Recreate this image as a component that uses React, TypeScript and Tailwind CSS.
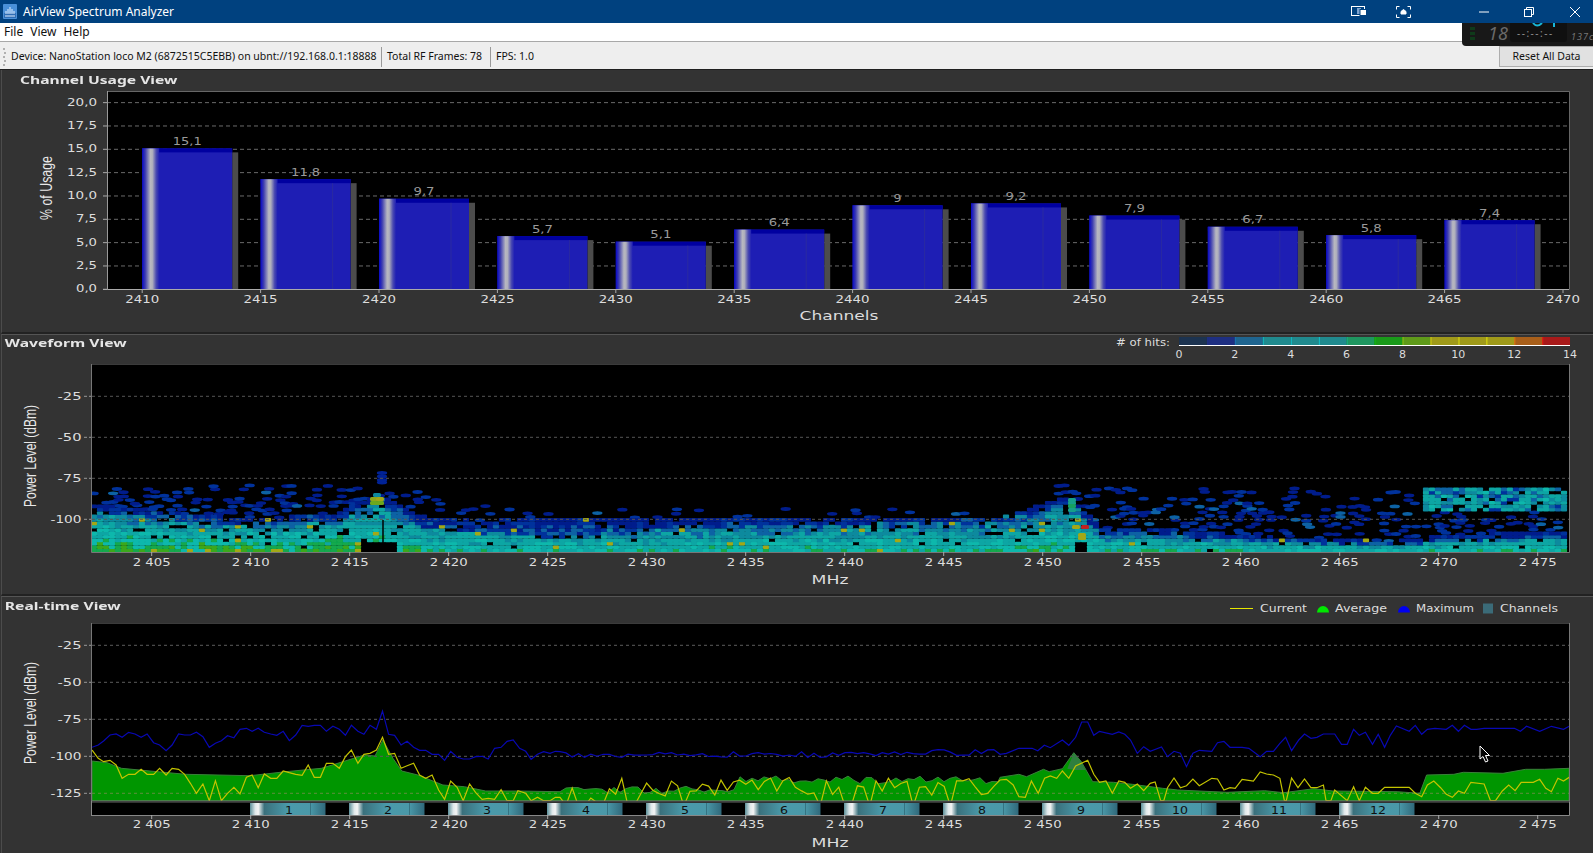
import React from "react";

type Pt = [number, number];
const seed = (s: number) => {
  let v = s;
  return () => {
    v = (v * 1664525 + 1013904223) % 4294967296;
    return v / 4294967296;
  };
};
const interp = (pts: Pt[], x: number) => {
  if (x <= pts[0][0]) return pts[0][1];
  for (let i = 1; i < pts.length; i++) {
    if (x <= pts[i][0]) {
      const [a, b] = pts[i - 1];
      const [c, d] = pts[i];
      return b + ((d - b) * (x - a)) / (c - a);
    }
  }
  return pts[pts.length - 1][1];
};
const L = (pts: number[][]): Pt[] => pts.map(([x, y]) => [x / 2.8, 690 + y / 3]);
const R = (pts: number[][]): Pt[] => pts.map(([x, y]) => [1000 + x / 2.644, 690 + y / 3]);
const str = (pts: Pt[]) => pts.map(([x, y]) => `${x.toFixed(1)},${y.toFixed(1)}`).join(" ");

const blueL = L([[258,172],[275,165],[290,153],[308,135],[325,132],[342,142],[360,127],[378,132],[395,142],[412,132],[430,158],[447,165],[465,182],[482,165],[500,132],[517,135],[533,135],[550,127],[568,140],[586,172],[603,160],[620,152],[637,137],[655,143],[672,118],[690,115],[706,124],[723,115],[740,127],[758,132],[775,136],[793,124],[810,152],[828,135],[846,106],[863,109],[880,106],[897,106],[914,124],[932,109],[950,118],[967,136],[984,106],[1002,124],[1019,133],[1036,106],[1054,118],[1071,63],[1088,133],[1105,136],[1123,165],[1140,154],[1158,172],[1175,181],[1192,181],[1210,193],[1228,193],[1245,211],[1262,184],[1280,202],[1297,207],[1315,207],[1332,200],[1350,199],[1367,207],[1385,175],[1403,172],[1420,154],[1437,150],[1455,175],[1472,184],[1487,208],[1505,193],[1522,185],[1540,190],[1555,184],[1568,185]]);
const blueR = R([[0,193],[17,190],[50,175],[85,175],[100,182],[117,166],[133,173],[165,150],[182,166],[200,142],[216,96],[232,96],[248,136],[263,124],[297,133],[314,126],[330,133],[345,150],[363,190],[380,170],[397,184],[427,171],[443,200],[460,184],[477,190],[493,230],[510,190],[527,181],[560,184],[575,158],[592,154],[608,172],[640,172],[658,175],[688,200],[705,184],[723,184],[740,160],[755,142],[771,182],[790,150],[805,132],[822,145],[838,142],[855,132],[885,132],[903,163],[918,163],[935,118],[950,136],[966,127],[985,163],[1000,133],[1017,172],[1032,136],[1048,108],[1082,124],[1098,106],[1115,133],[1130,118],[1150,115],[1180,118],[1196,106],[1212,124],[1228,106],[1245,118],[1260,118],[1280,115],[1360,115],[1376,124],[1392,109],[1427,124],[1458,109],[1490,118],[1505,109]]);
const yellowL = L([[258,180],[275,205],[290,215],[308,211],[325,225],[342,265],[360,253],[378,253],[395,238],[412,253],[430,253],[447,235],[465,255],[482,235],[500,238],[517,253],[533,280],[550,310],[568,282],[586,332],[603,272],[620,332],[637,310],[655,292],[672,312],[690,262],[706,255],[723,293],[740,252],[758,265],[775,265],[793,243],[810,248],[828,253],[846,256],[863,225],[880,262],[897,262],[914,220],[932,220],[950,235],[967,200],[984,180],[1002,220],[1019,193],[1036,190],[1054,180],[1071,142],[1088,193],[1105,190],[1123,235],[1140,227],[1158,220],[1175,255],[1192,265],[1210,255],[1228,300],[1245,328],[1262,273],[1280,292],[1297,332],[1315,282],[1332,308],[1350,328],[1367,325],[1385,328],[1403,299],[1420,332],[1437,332],[1450,302],[1472,310],[1487,332],[1505,322],[1522,332],[1540,332],[1555,322],[1568,322]]);
const yellowR = R([[0,270],[17,268],[35,285],[50,320],[67,322],[83,273],[101,310],[118,265],[133,258],[150,265],[165,243],[182,265],[200,228],[232,211],[248,253],[263,277],[280,273],[297,310],[314,273],[330,277],[345,295],[363,282],[380,302],[397,280],[410,276],[425,332],[433,332],[443,293],[460,264],[477,293],[493,287],[510,267],[527,287],[560,265],[575,267],[592,300],[608,293],[622,295],[640,268],[670,273],[688,246],[705,252],[723,255],[740,265],[752,332],[757,332],[771,264],[788,293],[805,267],[822,293],[838,293],[855,285],[862,332],[875,332],[885,300],[918,332],[935,290],[950,332],[966,292],[985,310],[1000,310],[1017,292],[1048,292],[1082,292],[1098,310],[1115,320],[1130,285],[1147,273],[1165,293],[1180,313],[1196,322],[1212,303],[1228,310],[1245,277],[1280,282],[1297,332],[1310,332],[1328,303],[1345,285],[1362,302],[1378,277],[1410,277],[1427,268],[1443,295],[1458,305],[1475,265],[1490,273],[1505,262]]);

const r1 = seed(7);
const midBlue: Pt[] = [];
const midYellow: Pt[] = [];
for (let x = 566; x < 1000; x += 6.2) {
  midBlue.push([x, 754.5 - (x > 900 ? 2 : 0) + (r1() - 0.5) * 6]);
  const base = x < 620 ? 797 : 786;
  let y = base + (r1() - 0.5) * 20;
  if (r1() < 0.12) y = 806;
  midYellow.push([x, y]);
}
const greenL = L([[258,213],[300,218],[340,235],[420,243],[520,253],[700,257],[800,245],[900,235],[960,215],[1020,195],[1050,198],[1072,150],[1100,205],[1125,243],[1170,255],[1240,285],[1300,290],[1360,303],[1450,303],[1568,305]]);
const greenR = R([[0,262],[50,253],[70,260],[115,238],[130,245],[165,236],[195,188],[215,215],[245,275],[300,277],[350,283],[430,295],[470,300],[600,307],[700,302],[750,308],[830,296],[880,303],[1050,305],[1110,310],[1128,255],[1200,253],[1225,247],[1330,250],[1390,238],[1440,238],[1505,235]]);
const r2 = seed(21);
const greenMid: Pt[] = [];
for (let x = 566; x < 1000; x += 6) {
  const base = x < 735 ? 790 : 780;
  greenMid.push([x, base + (r2() - 0.5) * 8]);
}
const greenTop = [...greenL, ...greenMid, ...greenR];
const greenPoly = `92,801 ${str(greenTop)} 1569,801`;
const spikePoly = str(R([[178,236],[195,188],[215,215],[226,240],[200,240]]));

// waveform heat-map
const bandTopPts: Pt[] = [[92,504],[190,514],[250,519],[340,513],[352,503],[380,496],[386,498],[420,516],[470,520],[1000,517],[1040,505],[1072,496],[1086,512],[1100,527],[1190,531],[1290,538],[1390,541],[1437,536],[1569,530]];
const strongTopPts: Pt[] = [[92,510],[190,522],[250,526],[340,520],[352,510],[380,503],[386,505],[420,527],[500,536],[590,538],[650,530],[740,526],[850,524],[950,521],[1030,513],[1072,498],[1086,520],[1100,533],[1190,537],[1290,543],[1390,547],[1437,542],[1569,537]];
const density: Pt[] = [[92,1.26],[340,1.26],[420,1.05],[520,.92],[700,.95],[900,1],[1060,1.04],[1180,1],[1569,1]];
const sparseTop: Pt[] = [[92,486],[340,484],[380,482],[440,498],[520,508],[1000,510],[1060,484],[1100,486],[1420,488],[1569,490]];
const sparseProb: Pt[] = [[92,.32],[380,.38],[440,.2],[520,.08],[1000,.08],[1060,.3],[1100,.3],[1420,.22],[1569,.22]];
const heatColor = (v: number) =>
  v < 0.2 ? "#001f8c" : v < 0.33 ? "#00339c" : v < 0.47 ? "#0a62a4" : v < 0.62 ? "#0a8a9e" : v < 0.85 ? "#0ca6a4" : v < 1 ? "#10b8ac" : v < 1.14 ? "#12a84e" : v < 1.24 ? "#3aa81c" : "#a3a818";
type Cell = { x: number; y: number; c: string; sparse: boolean };
const cells: Cell[] = [];
{
  const r = seed(99);
  for (let x = 94; x < 1570; x += 6) {
    const bandTop = interp(bandTopPts, x);
    const strong = interp(strongTopPts, x);
    const dens = interp(density, x);
    const sTop = interp(sparseTop, x);
    const sP = interp(sparseProb, x);
    const gap = (x > 363 && x < 397) || (x > 1075 && x < 1087);
    for (let y = 550.5; y > 478; y -= 3.4) {
      if (gap && y > 543) continue;
      if (x > 1425 && y > 488 && y < 513) {
        if (r() < 0.9) cells.push({ x, y, c: heatColor(0.28 + r() * 0.6), sparse: false });
        continue;
      }
      if (y >= bandTop) {
        const t = (y - bandTop) / Math.max(552 - bandTop, 1);
        let v = (0.14 + t * 0.68) * dens + (r() - 0.5) * 0.36 + (y > strong ? 0.14 : -0.04);
        if (r() < 0.012) v = 1.3;
        if (r() < 0.86 + t * 0.14) cells.push({ x, y, c: heatColor(v), sparse: false });
      } else if (y > sTop) {
        const d = (bandTop - y) / Math.max(bandTop - sTop, 1);
        if (r() < sP * (1 - 0.55 * d)) cells.push({ x: x + r() * 4 - 2, y: y + r() * 2 - 1, c: heatColor(r() * 0.36), sparse: true });
      }
    }
  }
  for (const y of [473, 476.5, 480, 482.5]) cells.push({ x: 382, y, c: "#002296", sparse: true });
}
const hotspots = [
  [374, 499, "#8fa818"], [380, 499, "#a3a818"], [374, 503, "#6da81c"], [380, 503, "#6da81c"], [377, 495, "#0a8a9e"],
  [1072, 500, "#14a08a"], [1072, 503, "#14a08a"], [1072, 506, "#14a060"], [1072, 510, "#14a08a"],
  [1076, 527, "#a3a818"], [1085, 527, "#c02020"], [1082, 535, "#a3a818"], [1082, 538, "#a3a818"],
] as const;

const Num = "'DejaVu Sans', sans-serif";
const AxisText = ({ x, y, w, children, anchor = "middle", fill = "#dddddd", size = 11 }: { x: number; y: number; w: number; children: React.ReactNode; anchor?: "middle" | "end" | "start"; fill?: string; size?: number }) => (
  <text x={x} y={y} textAnchor={anchor} textLength={w} lengthAdjust="spacingAndGlyphs" fontFamily={Num} fontSize={size} fill={fill}>
    {children}
  </text>
);

const bars = [15.1, 11.8, 9.7, 5.7, 5.1, 6.4, 9, 9.2, 7.9, 6.7, 5.8, 7.4];
const yTicks1 = ["0,0", "2,5", "5,0", "7,5", "10,0", "12,5", "15,0", "17,5", "20,0"];

function ChannelChart() {
  const Y = (v: number) => 289.3 - v * 9.333;
  return (
    <svg className="block w-[1591px] h-[241px]" viewBox="2 91 1591 241">
      <defs>
        <linearGradient id="barShine" x1="0" x2="1" y1="0" y2="0">
          <stop offset="0" stopColor="#0808c8" />
          <stop offset="0.18" stopColor="#3c3cb0" />
          <stop offset="0.48" stopColor="#b8b8c0" />
          <stop offset="0.6" stopColor="#b0b0bc" />
          <stop offset="0.82" stopColor="#4a4ab0" />
          <stop offset="1" stopColor="#1e1eb4" />
        </linearGradient>
      </defs>
      <rect x="107" y="91.5" width="1462" height="198" fill="#000" />
      {yTicks1.map((t, i) => {
        const y = Y(i * 2.5);
        return (
          <g key={t}>
            {i > 0 && <line x1="107" x2="1569" y1={y} y2={y} stroke="#6a6a6a" strokeDasharray="4 3" />}
            <line x1="103" x2="107" y1={y} y2={y} stroke="#aaa" />
            <AxisText x={97} y={y + 3} w={t.length > 3 ? 30 : 21} anchor="end">{t}</AxisText>
          </g>
        );
      })}
      {bars.map((v, i) => {
        const x = 142.2 + 118.4 * i;
        const top = Y(v);
        const h = 289.3 - top;
        const label = String(v).replace(".", ",");
        return (
          <g key={i}>
            <rect x={x + 90} y={top + 4} width={6} height={h - 4} fill="#4c4c4c" />
            <rect x={x} y={top} width={90} height={h} fill="#1e1eb4" />
            <rect x={x} y={top} width={90} height={4} fill="#0000a0" />
            <rect x={x} y={top} width={17} height={h} fill="url(#barShine)" />
            {i > 0 && <line x1={x + 72} x2={x + 72} y1={top + 4} y2={289} stroke="#2a2aa0" />}
            <AxisText x={x + 45} y={top - 3.5} w={label.length > 3 ? 29 : label.length > 1 ? 21 : 8} fill="#9a9a9a">{label}</AxisText>
          </g>
        );
      })}
      <path d="M107.5 91V289.5M107 91.5H1569.5V289.5" fill="none" stroke="#666" />
      <line x1="103" x2="1569" y1="289.5" y2="289.5" stroke="#aaa" />
      <line x1="107.5" x2="107.5" y1="91" y2="290" stroke="#999" />
      {Array.from({ length: 13 }).map((_, i) => {
        const x = 142.2 + 118.4 * i;
        return (
          <g key={i}>
            <line x1={x} x2={x} y1="289" y2="293" stroke="#aaa" />
            <AxisText x={x} y={302.5} w={34}>{2410 + i * 5}</AxisText>
          </g>
        );
      })}
      <AxisText x={839} y={320} w={79} size={12}>Channels</AxisText>
      <text transform="translate(52,188) rotate(-90)" textAnchor="middle" textLength={64} lengthAdjust="spacingAndGlyphs" fontFamily="'Liberation Sans', sans-serif" fontSize={16} fill="#e8e8e8">% of Usage</text>
    </svg>
  );
}

const mhzLabels = Array.from({ length: 15 }, (_, i) => 2405 + i * 5);
const FreqAxis = ({ tickY, labelY, titleY }: { tickY: number; labelY: number; titleY: number }) => (
  <g>
    {mhzLabels.map((f, i) => {
      const x = 151.7 + i * 99;
      return (
        <g key={f}>
          <line x1={x} x2={x} y1={tickY} y2={tickY + 4} stroke="#aaa" />
          <AxisText x={x} y={labelY} w={38}>{`2 ${f - 2000}`}</AxisText>
        </g>
      );
    })}
    <AxisText x={830} y={titleY} w={37} size={12}>MHz</AxisText>
  </g>
);

function WaveformChart() {
  const ticks: [string, number][] = [["-25", 396.3], ["-50", 437.3], ["-75", 478.3], ["-100", 519.3]];
  return (
    <svg className="block w-[1591px] h-[230px]" viewBox="2 364 1591 230">
      <defs>
        <clipPath id="wfClip"><rect x="92" y="364" width="1477" height="188" /></clipPath>
        <filter id="soft" x="0" y="0" width="1" height="1"><feGaussianBlur stdDeviation="0.75" /></filter>
      </defs>
      <rect x="92" y="364" width="1477" height="188.5" fill="#000" />
      <g clipPath="url(#wfClip)">
        <g filter="url(#soft)">
          {cells.filter((c) => c.sparse).map((c, i) => (
            <ellipse key={i} cx={c.x} cy={c.y} rx={5.2} ry={1.9} fill={c.c} />
          ))}
          {cells.filter((c) => !c.sparse).map((c, i) => (
            <rect key={i} x={c.x - 3.1} y={c.y - 1.9} width={6.2} height={3.8} rx={1} fill={c.c} />
          ))}
          {hotspots.map(([x, y, c], i) => (
            <rect key={i} x={x - 4} y={y - 2} width={8} height={4} rx={1.5} fill={c} />
          ))}
        </g>
        <line x1="383" x2="383" y1="520" y2="552" stroke="#000" strokeWidth="1.5" />
      </g>
      {ticks.map(([t, y]) => (
        <g key={t}>
          <line x1="92" x2="1569" y1={y} y2={y} stroke="#555" strokeDasharray="3 3" />
          <line x1="84" x2="92" y1={y} y2={y} stroke="#999" strokeDasharray="3 2" />
          <AxisText x={81.5} y={y + 4} w={t.length > 3 ? 31 : 24} anchor="end">{t}</AxisText>
        </g>
      ))}
      <path d="M92 364H1569.5V552.5H91.5V364" fill="none" stroke="#777" />
      <FreqAxis tickY={552} labelY={566} titleY={584} />
      <text transform="translate(36,456) rotate(-90)" textAnchor="middle" textLength={102} lengthAdjust="spacingAndGlyphs" fontFamily="'Liberation Sans', sans-serif" fontSize={16} fill="#e8e8e8">Power Level (dBm)</text>
    </svg>
  );
}

function RealtimeChart() {
  const ticks: [string, number][] = [["-25", 645.3], ["-50", 682.3], ["-75", 719.3], ["-100", 756.3], ["-125", 793.3]];
  return (
    <svg className="block w-[1591px] h-[230px]" viewBox="2 623 1591 230">
      <defs>
        <clipPath id="rtClip"><rect x="92" y="623" width="1477" height="178" /></clipPath>
        <linearGradient id="chanFill" x1="0" x2="1" y1="0" y2="0">
          <stop offset="0" stopColor="#5b8f99" />
          <stop offset="0.07" stopColor="#dfe8ea" />
          <stop offset="0.11" stopColor="#f4f4f4" />
          <stop offset="0.19" stopColor="#3a707c" />
          <stop offset="0.5" stopColor="#4a9aaa" />
          <stop offset="0.8" stopColor="#4a98a8" />
          <stop offset="1" stopColor="#30687a" />
        </linearGradient>
      </defs>
      <rect x="92" y="623" width="1477" height="178" fill="#000" />
      <polygon points={greenPoly} fill="#009600" stroke="#3a7f3a" clipPath="url(#rtClip)" />
      <polygon points={spikePoly} fill="#2f7f3f" />
      {ticks.map(([t, y]) => (
        <g key={t}>
          <line x1="92" x2="1569" y1={y} y2={y} stroke={t === "-125" ? "#5e8f3e" : "#5c5c5c"} strokeDasharray="3 3" />
          <line x1="84" x2="92" y1={y} y2={y} stroke="#999" strokeDasharray="3 2" />
          <AxisText x={81.5} y={y + 4} w={t.length > 3 ? 31 : 24} anchor="end">{t}</AxisText>
        </g>
      ))}
      <g clipPath="url(#rtClip)" fill="none">
        <polyline points={str([...blueL, ...midBlue, ...blueR])} stroke="#0808b4" strokeWidth="1.2" />
        <polyline points={str([...yellowL, ...midYellow, ...yellowR])} stroke="#c4c400" strokeWidth="1.2" />
      </g>
      <path d="M92 623H1569.5V801H91.5V623" fill="none" stroke="#777" />
      <rect x="92" y="801.5" width="1477" height="2" fill="#333" />
      <rect x="92" y="803" width="1477" height="12.5" fill="#000" />
      {Array.from({ length: 12 }).map((_, i) => {
        const x = 250 + i * 99;
        return (
          <g key={i}>
            <rect x={x} y={803} width={75.5} height={12.5} fill="url(#chanFill)" />
            <line x1={x + 60.5} x2={x + 60.5} y1={803} y2={815.5} stroke="#357382" />
            <AxisText x={x + 39} y={813.5} w={i > 8 ? 16 : 8} fill="#101010">{i + 1}</AxisText>
          </g>
        );
      })}
      <path d="M92 815.5H1569.5V801.5M91.5 801V816" fill="none" stroke="#888" />
      <FreqAxis tickY={815} labelY={828} titleY={846.5} />
      <text transform="translate(36,713) rotate(-90)" textAnchor="middle" textLength={102} lengthAdjust="spacingAndGlyphs" fontFamily="'Liberation Sans', sans-serif" fontSize={16} fill="#e8e8e8">Power Level (dBm)</text>
    </svg>
  );
}

const hitColors = ["#1c3350","#1e2f82","#1f6590","#208a8e","#208a8e","#208a8e","#1f9660","#1a9a1a","#5f9a1a","#a09a1a","#a09a1a","#a09a1a","#a85f1a","#a81a1a"];
const hitEdges = ["#1c3350","#1e2f82","#1a70b0","#12b0b8","#12b8c0","#12c0c8","#14b080","#12b812","#80c010","#c8c810","#d8d810","#d8d810","#d87a10","#e02010"];
function HitsLegend() {
  return (
    <svg className="block w-[480px] h-[29px]" viewBox="1113 335 480 29">
      <AxisText x={1116} y={346} w={54} anchor="start">{"# of hits:"}</AxisText>
      {hitColors.map((c, i) => (
        <g key={i}>
          <rect x={1179 + i * 27.93} y={337} width={27.93} height={8} fill={c} />
          <rect x={1179 + i * 27.93} y={337} width={1.2} height={8} fill={hitEdges[i]} />
        </g>
      ))}
      <rect x="1179" y="345" width="391" height="1" fill="#fff" />
      {Array.from({ length: 8 }).map((_, i) => {
        const v = i * 2;
        return (
          <AxisText key={i} x={1179 + i * 55.86} y={358} w={v >= 10 ? 14 : 7}>{v}</AxisText>
        );
      })}
    </svg>
  );
}

function RtLegend() {
  return (
    <svg className="block w-[373px] h-[26px]" viewBox="1220 597 373 26">
      <line x1="1230" x2="1253" y1="608.5" y2="608.5" stroke="#e8e800" />
      <AxisText x={1260} y={612} w={47} anchor="start">Current</AxisText>
      <path d="M1317 612.5a6 6.5 0 0 1 12 0z" fill="#00e800" />
      <AxisText x={1335} y={612} w={52} anchor="start">Average</AxisText>
      <path d="M1398 612.5a6 6.5 0 0 1 12 0z" fill="#0000f0" />
      <AxisText x={1416} y={612} w={58} anchor="start">Maximum</AxisText>
      <rect x="1483" y="603.5" width="10" height="10" fill="#3b6b78" />
      <AxisText x={1500} y={612} w={58} anchor="start">Channels</AxisText>
    </svg>
  );
}

const PanelTitle = ({ children, className }: { children: React.ReactNode; className: string }) => (
  <div className={`origin-left scale-x-[1.42] font-['DejaVu_Sans'] font-bold text-[11px] leading-none text-[#e6e6e6] whitespace-nowrap ${className}`}>{children}</div>
);

export default function App() {
  return (
    <div className="relative w-[1593px] h-[853px] overflow-hidden bg-[#333333] flex flex-col font-['Noto_Sans',sans-serif]">
      <div className="h-[23px] shrink-0 bg-[#00417f] flex items-center text-white text-[12px]">
        <svg className="ml-[3px] w-[14px] h-[15px]" viewBox="0 0 14 15">
          <rect width="14" height="15" rx="1" fill="#4a90d8" />
          <rect x="1" y="9" width="12" height="5" fill="#2d6db5" />
          <path d="M3 10V7M5 10V5M7 10V3M9 10V5M11 10V7M2 12h10" stroke="#dfeeff" strokeWidth="1" fill="none" />
        </svg>
        <span className="ml-[6px]">AirView Spectrum Analyzer</span>
        <div className="ml-auto flex items-center">
          <svg className="w-[16px] h-[11px]" viewBox="0 0 16 11" fill="none">
            <rect x="0.5" y="0.5" width="13" height="9" stroke="#fff" />
            <rect x="6" y="2" width="4" height="6" fill="#7fa4d0" />
            <rect x="9" y="3.5" width="6.5" height="6" fill="#fff" stroke="#00417f" />
          </svg>
          <svg className="ml-[29px] w-[15px] h-[12px]" viewBox="0 0 15 12" fill="none" stroke="#fff">
            <path d="M0.5 3.5V.5H3.5M11.5 .5H14.5V3.5M14.5 8.5V11.5H11.5M3.5 11.5H.5V8.5" />
            <path d="M5 8V5.5L7.5 3.5L10 5.5V8z" fill="#fff" />
          </svg>
          <svg className="ml-[68px] w-[10px] h-[10px]" viewBox="0 0 10 10"><path d="M0 5h10" stroke="#fff" /></svg>
          <svg className="ml-[35px] w-[10px] h-[10px]" viewBox="0 0 10 10" fill="none" stroke="#fff"><path d="M2.5 2.5V.5H9.5V7.5H7.5" /><rect x="0.5" y="2.5" width="7" height="7" /></svg>
          <svg className="ml-[36px] mr-[13px] w-[10px] h-[10px]" viewBox="0 0 10 10" stroke="#fff"><path d="M0 0L10 10M10 0L0 10" /></svg>
        </div>
      </div>
      <div className="h-[19px] shrink-0 bg-white border-b border-[#a8a8a8] flex items-center gap-[7px] pl-[4px] text-[12px] text-[#111]">
        <span>File</span><span>View</span><span>Help</span>
      </div>
      <div className="h-[28px] shrink-0 bg-[#eeeeee] border-b border-[#1f1f1f] flex items-center text-[10.5px] text-[#111] pl-[3px] pt-[2px]">
        <svg className="w-[4px] h-[20px]" viewBox="0 0 4 20" fill="#b0b0b0">
          <rect y="1" width="2" height="2" /><rect y="5" width="2" height="2" x="1" /><rect y="9" width="2" height="2" /><rect y="13" width="2" height="2" x="1" /><rect y="17" width="2" height="2" />
        </svg>
        <span className="ml-[4px] w-[370px] whitespace-nowrap">Device: NanoStation loco M2 (6872515C5EBB) on ubnt://192.168.0.1:18888</span>
        <span className="h-[20px] border-l border-[#9a9a9a] pl-[5px] w-[109px] whitespace-nowrap flex items-center">Total RF Frames: 78</span>
        <span className="h-[20px] border-l border-[#9a9a9a] pl-[5px] whitespace-nowrap flex items-center">FPS: 1.0</span>
        <button className="ml-auto self-start mt-[2px] w-[94px] h-[21px] bg-[#e1e1e1] border border-[#adadad] border-r-0 text-[10.5px] text-[#111]">Reset All Data</button>
      </div>

      <div className="h-[264px] shrink-0 ml-px border-l border-b-2 border-l-[#4c4c4c] border-b-[#222]">
        <div className="h-[21px] pt-[4px] pl-[18px]"><PanelTitle className="">Channel Usage View</PanelTitle></div>
        <ChannelChart />
      </div>
      <div className="h-[262px] shrink-0 ml-px border-l border-t border-b-2 border-l-[#4c4c4c] border-t-[#555] border-b-[#222]">
        <div className="h-[29px] flex justify-between">
          <PanelTitle className="pl-[2px] pt-[2px]">Waveform View</PanelTitle>
          <HitsLegend />
        </div>
        <WaveformChart />
      </div>
      <div className="h-[257px] shrink-0 ml-px border-l border-t border-l-[#4c4c4c] border-t-[#555]">
        <div className="h-[26px] flex justify-between">
          <PanelTitle className="pl-[2px] pt-[3px]">Real-time View</PanelTitle>
          <RtLegend />
        </div>
        <RealtimeChart />
      </div>

      {/* desktop widget overlapping the window's top right corner */}
      <div className="absolute left-[1462px] top-[23px] w-[131px] h-[23px] bg-[#181818] rounded-bl-[4px]">
        <div className="absolute left-[8px] top-[4px] grid grid-cols-1 gap-[2px]">
          <span className="w-[5px] h-[3px] bg-[#0f3a1a]" /><span className="w-[5px] h-[3px] bg-[#0f3a1a]" /><span className="w-[5px] h-[3px] bg-[#0f3a1a]" />
        </div>
        <span className="absolute left-[26px] top-[1px] leading-none font-['DejaVu_Sans'] italic text-[18px] text-[#6a6a6a]">18</span>
        <div className="absolute left-[48px] top-0 w-[57px] h-[19px] bg-[#101010] rounded-b-[3px]" />
        <svg className="absolute left-[70px] top-0 w-[30px] h-[6px]" viewBox="0 0 30 6" fill="none" stroke="#19b8d8" strokeWidth="2">
          <path d="M1 0Q5 5 10 0" /><path d="M22 0V4" />
        </svg>
        <span className="absolute left-[55px] top-[5px] leading-none font-['DejaVu_Sans'] text-[10px] tracking-[1.5px] text-[#909090]">--:--:--</span>
        <span className="absolute left-[109px] top-[9px] leading-none font-['DejaVu_Sans'] italic text-[9px] tracking-[1px] text-[#777]">137c</span>
      </div>

      {/* mouse pointer */}
      <svg className="absolute left-[1479px] top-[745px] w-[12px] h-[18px]" viewBox="0 0 12 18">
        <path d="M1 1V14L4 11.5L6.5 17L9 16L6.5 10.5H10.5z" fill="#000" stroke="#fff" strokeWidth="1" />
      </svg>
    </div>
  );
}
